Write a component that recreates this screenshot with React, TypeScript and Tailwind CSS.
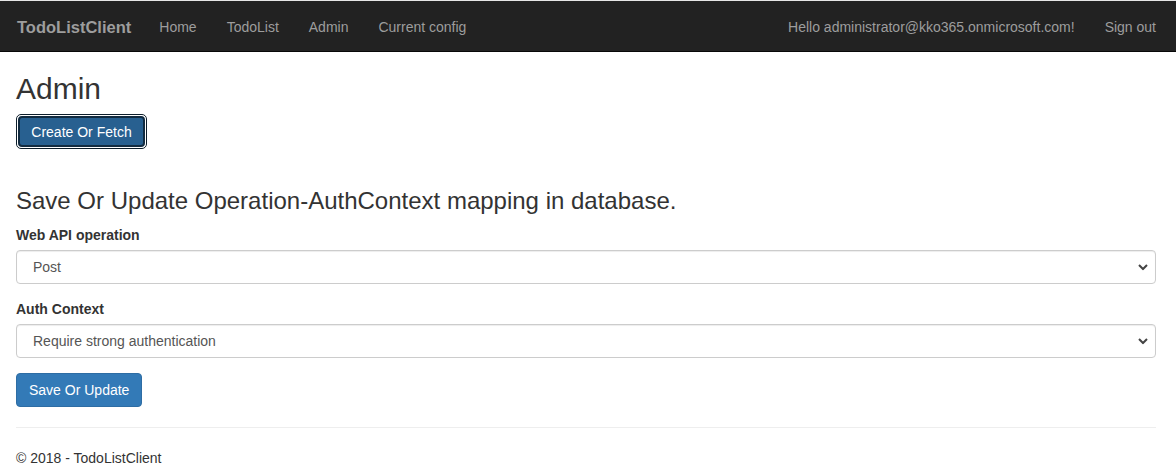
const font = { fontFamily: '"Liberation Sans", Arial, sans-serif' };

function Chevron() {
  return (
    <svg
      width="10"
      height="7"
      viewBox="0 0 10 7"
      className="pointer-events-none absolute right-[8px] top-1/2 -translate-y-1/2"
    >
      <path d="M1 1.5 L5 5.5 L9 1.5" fill="none" stroke="#444" strokeWidth="2" />
    </svg>
  );
}

function SelectField({ label, value }: { label: string; value: string }) {
  return (
    <div className="mb-[15px]">
      <label className="mb-[5px] block text-[14px] font-bold leading-[20px] text-[#333]">
        {label}
      </label>
      <div className="relative">
        <select
          defaultValue={value}
          className="block h-[34px] w-full appearance-none rounded-[4px] border border-[#ccc] bg-white pl-[16px] pr-[30px] text-[14px] text-[#555] shadow-[inset_0_1px_1px_rgba(0,0,0,0.075)] outline-none"
          style={font}
        >
          <option>{value}</option>
        </select>
        <Chevron />
      </div>
    </div>
  );
}

export default function App() {
  const links = ["Home", "TodoList", "Admin", "Current config"];

  return (
    <div className="min-h-[474px] bg-white text-[#333]" style={font}>
      <div className="h-px bg-[#e6e6e6]" />
      <nav className="flex h-[51px] items-stretch border-b border-[#080808] bg-[#222] pt-[3px] pr-[5px] text-[14px] text-[#9d9d9d]">
        <a className="flex items-center pl-[17px] pr-[13px] text-[16.5px] font-bold">
          TodoListClient
        </a>
        {links.map((l) => (
          <a key={l} className="flex items-center px-[15px]">
            {l}
          </a>
        ))}
        <div className="ml-auto flex">
          <span className="flex items-center px-[15px]">
            Hello administrator@kko365.onmicrosoft.com!
          </span>
          <a className="flex items-center px-[15px]">Sign out</a>
        </div>
      </nav>

      <main className="pl-[16px] pr-[20px]">
        <h2 className="mt-[20px] mb-[9px] text-[30px] leading-[33px] font-normal">Admin</h2>

        <div className="inline-block rounded-[5px] border border-[#0d1e2b] bg-white p-px">
          <button
            className="block h-[31px] w-[127px] rounded-[4px] border-2 border-[#122b40] bg-[#286090] text-[14px] leading-none text-white"
            style={font}
          >
            Create Or Fetch
          </button>
        </div>

        <h3 className="mt-[39px] mb-[11px] text-[24px] leading-[26px] font-normal">
          Save Or Update Operation-AuthContext mapping in database.
        </h3>

        <SelectField label="Web API operation" value="Post" />
        <SelectField label="Auth Context" value="Require strong authentication" />

        <button
          className="h-[34px] rounded-[4px] border border-[#2e6da4] bg-[#337ab7] px-[12px] text-[14px] text-white"
          style={font}
        >
          Save Or Update
        </button>

        <hr className="mt-[20px] mb-[20px] border-t border-[#eee]" />

        <footer>
          <p className="text-[14px] leading-[20px]">© 2018 - TodoListClient</p>
        </footer>
      </main>
    </div>
  );
}
